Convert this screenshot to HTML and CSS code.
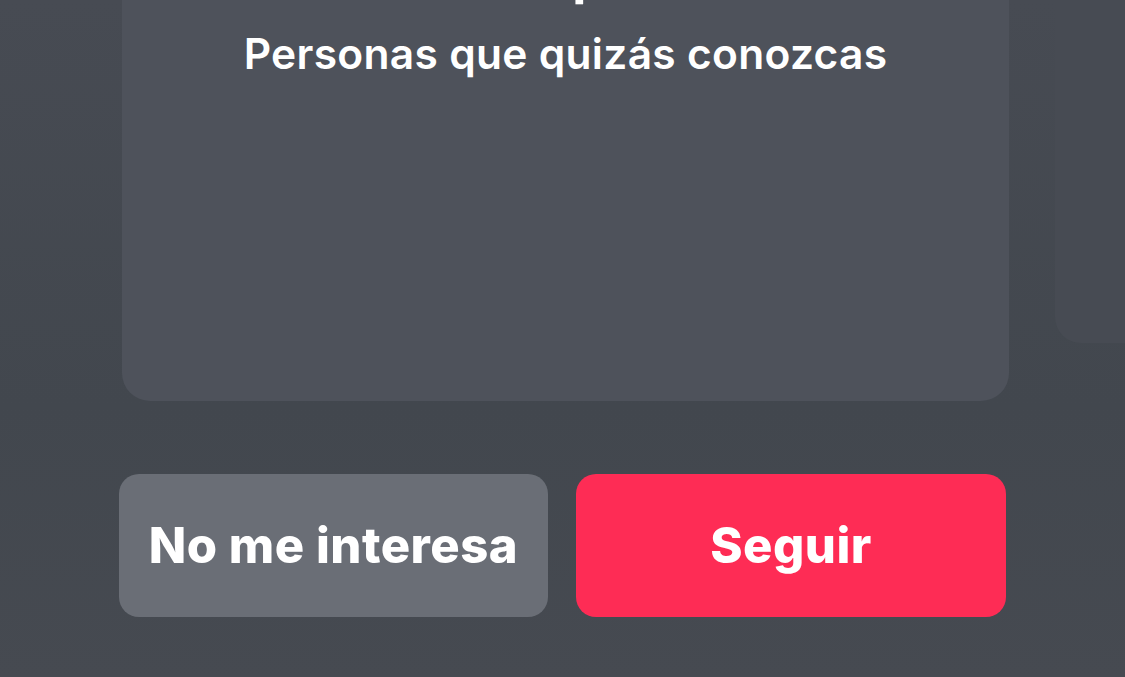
FILE: index.html
```html
<!DOCTYPE html>
<html lang="es">
<head>
<meta charset="utf-8">
<link rel="stylesheet" href="styles.css">
</head>
<body>
<div class="page">
  <div class="carousel">
    <div class="card">
      <h1 class="name">Sophie</h1>
      <p class="subtitle">Personas que quizás conozcas</p>
    </div>
    <div class="card card-next"></div>
  </div>
  <div class="actions">
    <button class="btn btn-secondary">No me interesa</button>
    <button class="btn btn-primary">Seguir</button>
  </div>
</div>
</body>
</html>
```

FILE: styles.css
```css
* { box-sizing: border-box; }
html, body {
  margin: 0;
  width: 1125px;
  height: 677px;
  overflow: hidden;
}
body {
  background: linear-gradient(180deg, #474b53 0%, #42474e 60%, #464a51 100%);
  font-family: Inter, "Noto Sans", sans-serif;
  color: #fff;
}
.page {
  padding-left: 119px;
}
.carousel {
  display: flex;
  align-items: flex-start;
  gap: 46px;
  margin-top: -80px;
  margin-left: 3px;
}
.card {
  flex: 0 0 887px;
  height: 481px;
  background: #4e525b;
  border-radius: 28px;
  padding-top: 30px;
  display: flex;
  flex-direction: column;
  align-items: center;
}
.card-next {
  height: 423px;
  background: #474b53;
  border-radius: 26px;
}
.name {
  margin: 0;
  padding-left: 58px;
  font-size: 52px;
  line-height: 1;
  font-weight: 700;
  height: 52px;
}
.subtitle {
  margin: 31px 0 0;
  font-size: 42.5px;
  line-height: 1;
  font-weight: 600;
  letter-spacing: 0.3px;
}
.actions {
  display: flex;
  gap: 28px;
  margin-top: 73px;
}
.btn {
  width: 429px;
  height: 143px;
  border: 0;
  border-radius: 20px;
  font-family: Inter, "Noto Sans", sans-serif;
  font-size: 49px;
  font-weight: 800;
  letter-spacing: 0.5px;
  color: #fff;
  padding: 0;
}
.btn-secondary { background: #6a6e76; }
.btn-primary { background: #fe2c55; width: 430px; }
```
